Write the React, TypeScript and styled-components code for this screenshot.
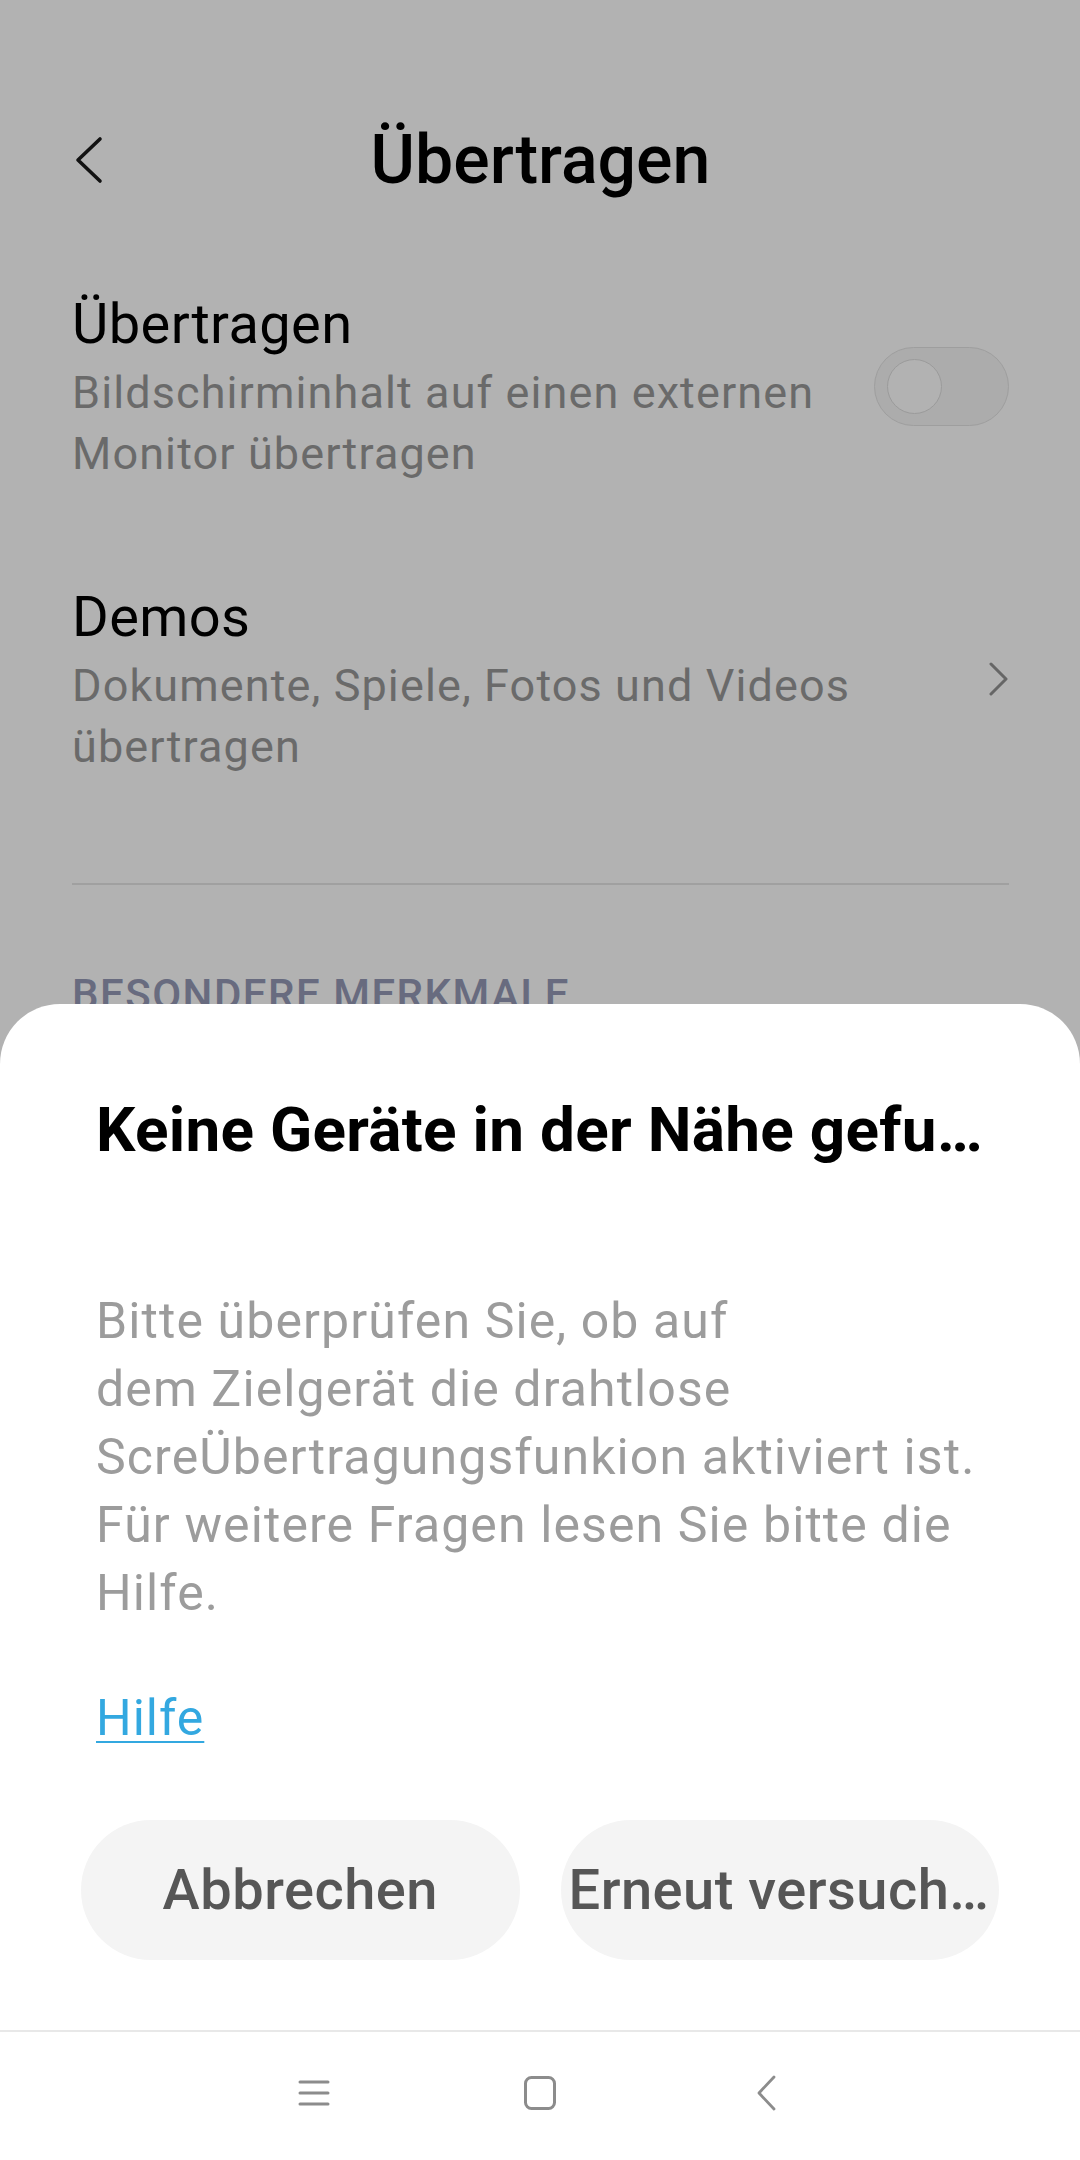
import React from "react";
import styled, { createGlobalStyle } from "styled-components";

const GlobalStyle = createGlobalStyle`
  html, body { margin: 0; padding: 0; background: #ffffff; }
  body { font-family: Roboto, "Noto Sans", "Liberation Sans", sans-serif; -webkit-font-smoothing: antialiased; }
  * { box-sizing: border-box; }
`;

const Screen = styled.div`
  position: relative;
  width: 1080px;
  height: 2160px;
  overflow: hidden;
  background: #ffffff;
`;

const SettingsPage = styled.div`
  display: flex;
  flex-direction: column;
  padding: 110px 71px 0 72px;
`;

const Header = styled.header`
  display: grid;
  grid-template-columns: 1fr auto 1fr;
  align-items: center;
  height: 100px;
  margin: 0 0 30px 0;
`;

const BackButton = styled.button`
  justify-self: start;
  display: flex;
  align-items: center;
  padding: 0;
  margin-left: 2px;
  border: 0;
  background: none;
  color: #1a1a1a;
`;

const HeaderTitle = styled.h1`
  margin: 0;
  font-size: 68px;
  line-height: 68px;
  font-weight: 500;
  color: #000;
  text-align: center;
`;

const Item = styled.div`
  display: flex;
  align-items: center;
  gap: 40px;
  padding: 48px 0 49px;
`;

const ItemText = styled.div`
  flex: 1;
  display: flex;
  flex-direction: column;
  gap: 2px;
`;

const ItemTitle = styled.div`
  font-size: 56px;
  line-height: 72px;
  letter-spacing: 0.4px;
  color: #000;
`;

const ItemSubtitle = styled.div`
  font-size: 45px;
  line-height: 61px;
  letter-spacing: 1.1px;
  color: #999999;
`;

const Toggle = styled.div`
  flex: none;
  position: relative;
  width: 135px;
  height: 79px;
  border-radius: 40px;
  background: #f6f6f6;
  border: 1.5px solid #e3e3e3;
  display: flex;
  align-items: center;
  padding-left: 12px;
`;

const Knob = styled.div`
  width: 55px;
  height: 55px;
  border-radius: 50%;
  background: #ffffff;
  border: 1.5px solid #dedede;
`;

const Chevron = styled.div`
  flex: none;
  display: flex;
  align-items: center;
  color: #929292;
`;

const Divider = styled.hr`
  margin: 57px 0 0;
  border: 0;
  height: 2px;
  background: #e6e6e6;
`;

const SectionHeader = styled.div`
  margin-top: 85px;
  font-size: 42px;
  line-height: 50px;
  font-weight: 500;
  letter-spacing: 1.5px;
  color: #959ab6;
`;

const Scrim = styled.div`
  position: absolute;
  inset: 0;
  background: rgba(0, 0, 0, 0.3);
`;

const BottomArea = styled.div`
  position: absolute;
  left: 0;
  right: 0;
  bottom: 0;
  display: flex;
  flex-direction: column;
`;

const Sheet = styled.div`
  height: 1026px;
  background: #ffffff;
  border-radius: 60px 60px 0 0;
  padding: 86px 96px 0;
  display: flex;
  flex-direction: column;
`;

const SheetTitle = styled.h2`
  margin: 0;
  font-size: 62px;
  line-height: 80px;
  font-weight: 700;
  letter-spacing: 0.3px;
  color: #000;
  white-space: nowrap;
  overflow: hidden;
  text-overflow: ellipsis;
`;

const SheetBody = styled.p`
  margin: 117px 0 0;
  font-size: 50px;
  line-height: 68px;
  letter-spacing: 1.1px;
  color: #9c9c9c;
`;

const HelpLink = styled.a`
  align-self: flex-start;
  margin-top: 57px;
  font-size: 50px;
  line-height: 68px;
  letter-spacing: 1px;
  color: #33a8e0;
  text-decoration: underline;
  text-decoration-thickness: 2px;
  text-underline-offset: 6px;
`;

const ButtonRow = styled.div`
  display: grid;
  grid-template-columns: 1fr 1fr;
  gap: 41px;
  margin: 68px -15px 0;
`;

const SheetButton = styled.button`
  height: 140px;
  border: 0;
  border-radius: 70px;
  background: #f4f4f4;
  padding: 0 8px;
  font-family: Roboto, "Noto Sans", "Liberation Sans", sans-serif;
  font-size: 56px;
  font-weight: 500;
  letter-spacing: 0.5px;
  color: #565656;
  white-space: nowrap;
  overflow: hidden;
  text-overflow: ellipsis;
`;

const NavBar = styled.nav`
  height: 130px;
  background: #ffffff;
  border-top: 2px solid #e8e8e8;
  display: grid;
  grid-template-columns: repeat(3, 226px);
  justify-content: center;
  align-items: center;
  color: #8c8c8c;
`;

const NavIcon = styled.div`
  display: flex;
  justify-content: center;
  align-items: center;
  padding-bottom: 6px;
`;

export default function App() {
  return (
    <>
      <GlobalStyle />
      <Screen>
        <SettingsPage>
          <Header>
            <BackButton aria-label="Zurück">
              <svg width="30" height="48" viewBox="0 0 30 48" fill="none">
                <polyline points="26,3 4,24 26,45" stroke="currentColor" strokeWidth="3.6" strokeLinecap="round" strokeLinejoin="round" />
              </svg>
            </BackButton>
            <HeaderTitle>Übertragen</HeaderTitle>
            <span />
          </Header>

          <Item>
            <ItemText>
              <ItemTitle>Übertragen</ItemTitle>
              <ItemSubtitle>Bildschirminhalt auf einen externen Monitor übertragen</ItemSubtitle>
            </ItemText>
            <Toggle>
              <Knob />
            </Toggle>
          </Item>

          <Item>
            <ItemText>
              <ItemTitle>Demos</ItemTitle>
              <ItemSubtitle>Dokumente, Spiele, Fotos und Videos übertragen</ItemSubtitle>
            </ItemText>
            <Chevron>
              <svg width="20" height="34" viewBox="0 0 20 34" fill="none">
                <polyline points="2,2 17,17 2,32" stroke="currentColor" strokeWidth="3" strokeLinecap="round" strokeLinejoin="round" />
              </svg>
            </Chevron>
          </Item>

          <Divider />
          <SectionHeader>BESONDERE MERKMALE</SectionHeader>
        </SettingsPage>

        <Scrim />

        <BottomArea>
          <Sheet>
            <SheetTitle>Keine Geräte in der Nähe gefunden</SheetTitle>
            <SheetBody>
              Bitte überprüfen Sie, ob auf
              <br />
              dem Zielgerät die drahtlose
              <br />
              ScreÜbertragungsfunkion aktiviert ist. Für weitere Fragen lesen Sie bitte die Hilfe.
            </SheetBody>
            <HelpLink href="#">Hilfe</HelpLink>
            <ButtonRow>
              <SheetButton>Abbrechen</SheetButton>
              <SheetButton>Erneut versuchen</SheetButton>
            </ButtonRow>
          </Sheet>
          <NavBar>
            <NavIcon>
              <svg width="32" height="28" viewBox="0 0 32 28" fill="none">
                <line x1="2" y1="3" x2="30" y2="3" stroke="currentColor" strokeWidth="3" strokeLinecap="round" />
                <line x1="2" y1="14" x2="30" y2="14" stroke="currentColor" strokeWidth="3" strokeLinecap="round" />
                <line x1="2" y1="25" x2="30" y2="25" stroke="currentColor" strokeWidth="3" strokeLinecap="round" />
              </svg>
            </NavIcon>
            <NavIcon>
              <svg width="32" height="34" viewBox="0 0 32 34" fill="none">
                <rect x="1.5" y="1.5" width="29" height="31" rx="6" stroke="currentColor" strokeWidth="3" />
              </svg>
            </NavIcon>
            <NavIcon>
              <svg width="22" height="36" viewBox="0 0 22 36" fill="none">
                <polyline points="19,2 4,18 19,34" stroke="currentColor" strokeWidth="2.8" strokeLinecap="round" strokeLinejoin="round" />
              </svg>
            </NavIcon>
          </NavBar>
        </BottomArea>
      </Screen>
    </>
  );
}
